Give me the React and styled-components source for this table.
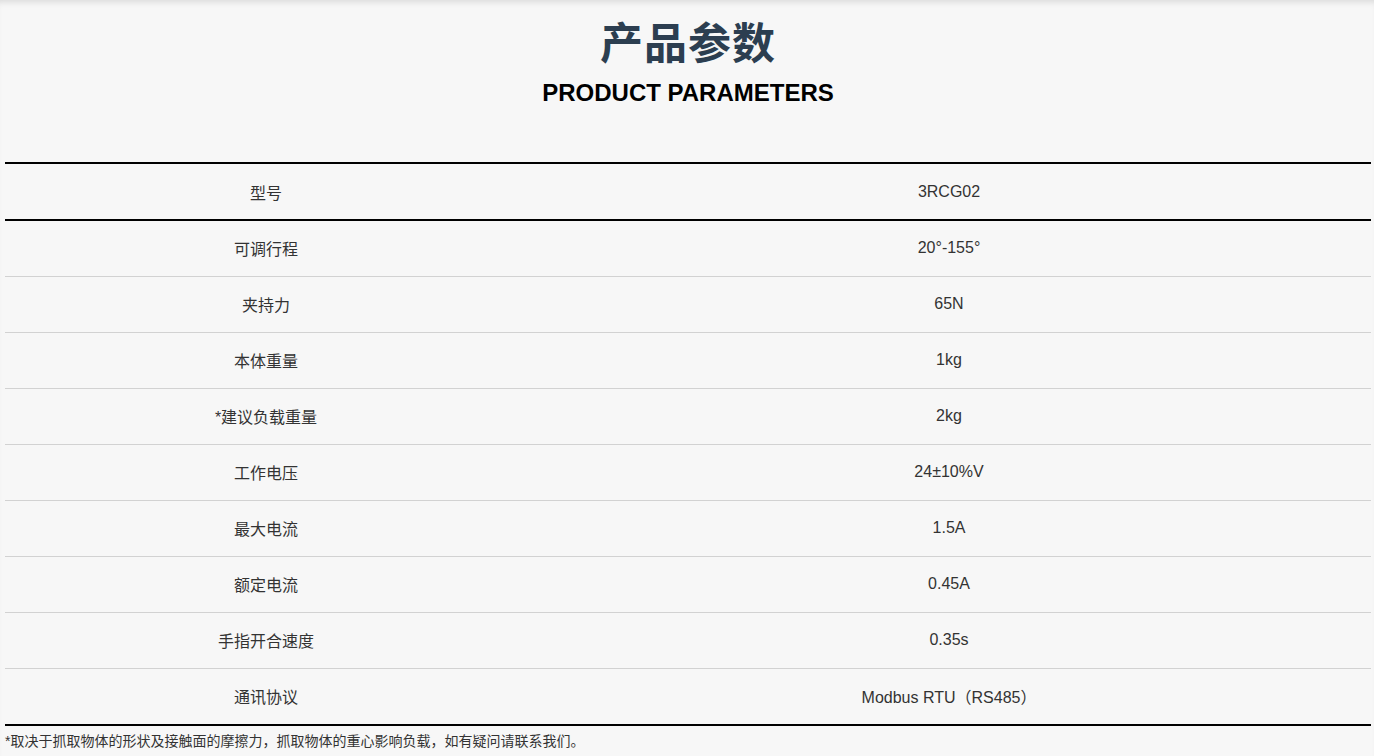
import React from "react";
import styled, { createGlobalStyle } from "styled-components";

const Global = createGlobalStyle`
  html, body { margin: 0; padding: 0; background: #f7f7f7; }
  body { font-family: "Liberation Sans", Arial, "Noto Sans CJK SC", sans-serif; color: #333; }
`;

const Page = styled.div`
  min-height: 756px;
  background: #f7f7f7;
  box-shadow: inset 0 6px 6px -4px rgba(0, 0, 0, 0.12);
  padding: 0 3px 0 5px;
  box-sizing: border-box;
`;

const Header = styled.header`
  display: flex;
  flex-direction: column;
  align-items: center;
  padding-top: 13px;
  height: 162px;
  box-sizing: border-box;
`;

const Title = styled.h1`
  margin: 0;
  font-family: "Noto Sans CJK SC", sans-serif;
  font-weight: 700;
  font-size: 43px;
  line-height: 54px;
  color: #2c3e50;
  letter-spacing: 1px;
`;

const Subtitle = styled.h2`
  margin: 11px 0 0;
  font-family: "Liberation Sans", Arial, sans-serif;
  font-weight: 700;
  font-size: 24px;
  line-height: 30px;
  color: #000;
`;

const Table = styled.table`
  width: 1366px;
  border-collapse: collapse;
  border-top: 2px solid #000;
  border-bottom: 2px solid #000;
`;

const Row = styled.tr`
  height: ${(p) => (p.$head ? "57px" : "56px")};
  border-bottom: ${(p) => (p.$head ? "2px solid #000" : "1px solid #d2d2d2")};
  &:last-child { border-bottom: none; height: 57px; }
`;

const Cell = styled.td`
  text-align: center;
  vertical-align: middle;
  padding: 0;
  font-size: 16px;
  color: #333;
  font-family: "Liberation Sans", Arial, "Noto Sans CJK SC", sans-serif;
  width: ${(p) => p.$w || "auto"};
`;

const Note = styled.p`
  margin: 6px 0 0;
  font-size: 14px;
  line-height: 18px;
  color: #333;
  font-family: "Liberation Sans", Arial, "Noto Sans CJK SC", sans-serif;
`;

const rows = [
  ["可调行程", "20°-155°"],
  ["夹持力", "65N"],
  ["本体重量", "1kg"],
  ["*建议负载重量", "2kg"],
  ["工作电压", "24±10%V"],
  ["最大电流", "1.5A"],
  ["额定电流", "0.45A"],
  ["手指开合速度", "0.35s"],
  ["通讯协议", "Modbus RTU（RS485）"],
];

export default function App() {
  return (
    <>
      <Global />
      <Page>
        <Header>
          <Title>产品参数</Title>
          <Subtitle>PRODUCT PARAMETERS</Subtitle>
        </Header>
        <Table>
          <tbody>
            <Row $head>
              <Cell $w="522px">型号</Cell>
              <Cell>3RCG02</Cell>
            </Row>
            {rows.map(([k, v]) => (
              <Row key={k}>
                <Cell $w="522px">{k}</Cell>
                <Cell>{v}</Cell>
              </Row>
            ))}
          </tbody>
        </Table>
        <Note>*取决于抓取物体的形状及接触面的摩擦力，抓取物体的重心影响负载，如有疑问请联系我们。</Note>
      </Page>
    </>
  );
}
